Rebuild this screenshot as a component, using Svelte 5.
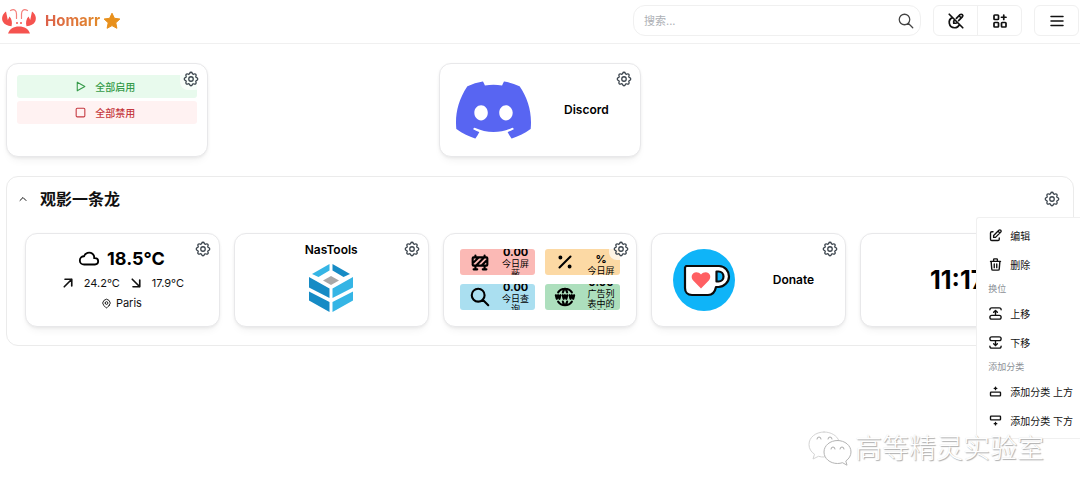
<script lang="ts">
  const icons: Record<string, string> = {
    gear: 'M10.325 4.317c.426 -1.756 2.924 -1.756 3.35 0a1.724 1.724 0 0 0 2.573 1.066c1.543 -.94 3.31 .826 2.37 2.37a1.724 1.724 0 0 0 1.065 2.572c1.756 .426 1.756 2.924 0 3.35a1.724 1.724 0 0 0 -1.066 2.573c.94 1.543 -.826 3.31 -2.37 2.37a1.724 1.724 0 0 0 -2.572 1.065c-.426 1.756 -2.924 1.756 -3.35 0a1.724 1.724 0 0 0 -2.573 -1.066c-1.543 .94 -3.31 -.826 -2.37 -2.37a1.724 1.724 0 0 0 -1.065 -2.572c-1.756 -.426 -1.756 -2.924 0 -3.35a1.724 1.724 0 0 0 1.066 -2.573c-.94 -1.543 .826 -3.31 2.37 -2.37c1 .608 2.296 .07 2.572 -1.065z M9 12a3 3 0 1 0 6 0a3 3 0 0 0 -6 0',
    play: 'M6 4v16l14 -8z',
    stop: 'M4 6a2 2 0 0 1 2 -2h12a2 2 0 0 1 2 2v12a2 2 0 0 1 -2 2h-12a2 2 0 0 1 -2 -2z',
    search: 'M3 10a7 7 0 1 0 14 0a7 7 0 1 0 -14 0 M21 21l-6 -6',
    editOff: 'M10.507 10.498l-1.507 1.502v3h3l1.493 -1.498m2 -2.01l4.89 -4.907a2.1 2.1 0 0 0 -2.97 -2.97l-4.913 4.896 M16 5l3 3 M7.476 7.471a7 7 0 0 0 2.524 13.529a7 7 0 0 0 6.53 -4.474 M3 3l18 18',
    gridAdd: 'M4 5a1 1 0 0 1 1 -1h4a1 1 0 0 1 1 1v4a1 1 0 0 1 -1 1h-4a1 1 0 0 1 -1 -1z M4 15a1 1 0 0 1 1 -1h4a1 1 0 0 1 1 1v4a1 1 0 0 1 -1 1h-4a1 1 0 0 1 -1 -1z M14 15a1 1 0 0 1 1 -1h4a1 1 0 0 1 1 1v4a1 1 0 0 1 -1 1h-4a1 1 0 0 1 -1 -1z M14 7h6 M17 4v6',
    menu: 'M4 6h16 M4 12h16 M4 18h16',
    chevron: 'M6 15l6 -6l6 6',
    cloud: 'M6.657 18c-2.572 0 -4.657 -2.007 -4.657 -4.483c0 -2.475 2.085 -4.482 4.657 -4.482c.393 -1.762 1.794 -3.2 3.675 -3.773c1.88 -.572 3.956 -.193 5.444 1c1.488 1.19 2.162 3.007 1.77 4.769h.99c1.913 0 3.464 1.56 3.464 3.486c0 1.927 -1.551 3.487 -3.465 3.487h-11.878',
    upRight: 'M17 7l-10 10 M8 7h9v9',
    downRight: 'M7 7l10 10 M17 8v9h-9',
    pin: 'M9 11a3 3 0 1 0 6 0a3 3 0 0 0 -6 0 M17.657 16.657l-4.243 4.243a2 2 0 0 1 -2.827 0l-4.244 -4.243a8 8 0 1 1 11.314 0z',
    barrier: 'M4 8a1 1 0 0 1 1 -1h14a1 1 0 0 1 1 1v7a1 1 0 0 1 -1 1h-14a1 1 0 0 1 -1 -1z M7 16v4 M7.5 16l9 -9 M13.5 16l6.5 -6.5 M4 13.5l6.5 -6.5 M17 16v4 M5 20h4 M15 20h4 M17 7v-2 M7 7v-2',
    percent: 'M16 17a1 1 0 1 0 2 0a1 1 0 1 0 -2 0 M6 7a1 1 0 1 0 2 0a1 1 0 1 0 -2 0 M6 18l12 -12',
    www: 'M19.5 7a9 9 0 0 0 -7.5 -4a8.991 8.991 0 0 0 -7.484 4 M11.5 3a16.989 16.989 0 0 0 -1.826 4 M12.5 3a16.989 16.989 0 0 1 1.828 4 M19.5 17a9 9 0 0 1 -7.5 4a8.991 8.991 0 0 1 -7.484 -4 M11.5 21a16.989 16.989 0 0 1 -1.826 -4 M12.5 21a16.989 16.989 0 0 0 1.828 -4 M2 10l1 4l1.5 -4l1.5 4l1 -4 M17 10l1 4l1.5 -4l1.5 4l1 -4 M9.5 10l1 4l1.5 -4l1.5 4l1 -4',
    edit: 'M8 6h-2a2 2 0 0 0 -2 2v10a2 2 0 0 0 2 2h10a2 2 0 0 0 2 -2v-2 M20.385 6.585a2.1 2.1 0 0 0 -2.97 -2.97l-8.415 8.385v3h3l8.385 -8.415z M16 5l3 3',
    trash: 'M4 7h16 M10 11v6 M14 11v6 M5 7l1 12a2 2 0 0 0 2 2h8a2 2 0 0 0 2 -2l1 -12 M9 7v-3a1 1 0 0 1 1 -1h4a1 1 0 0 1 1 1v3',
    moveUp: 'M21 6a3 3 0 0 0 -3 -3h-12a3 3 0 0 0 -3 3 M6 21h12a3 3 0 0 0 0 -6h-12a3 3 0 0 0 0 6z M12 15v-8 M9 10l3 -3l3 3',
    moveDown: 'M21 18a3 3 0 0 1 -3 3h-12a3 3 0 0 1 -3 -3 M3 6a3 3 0 0 1 3 -3h12a3 3 0 0 1 0 6h-12a3 3 0 0 1 -3 -3z M12 9v8 M9 14l3 3l3 -3',
    rowTop: 'M4 18v-4a1 1 0 0 1 1 -1h14a1 1 0 0 1 1 1v4a1 1 0 0 1 -1 1h-14a1 1 0 0 1 -1 -1z M12 9v-4 M10 7h4',
    rowBottom: 'M20 6v4a1 1 0 0 1 -1 1h-14a1 1 0 0 1 -1 -1v-4a1 1 0 0 1 1 -1h14a1 1 0 0 1 1 1z M12 15v4 M14 17h-4',
  };

  const stats = [
    { tone: 'red', icon: 'barrier', value: '0.00', label: '今日屏蔽' },
    { tone: 'orange', icon: 'percent', value: '0.00 %', label: '今日屏蔽' },
    { tone: 'blue', icon: 'search', value: '0.00', label: '今日查询' },
    { tone: 'green', icon: 'www', value: '0.00', label: '广告列表中的域名' },
  ];

  const menuGroups = [
    { label: '', items: [['edit', '编辑'], ['trash', '删除']] },
    { label: '换位', items: [['moveUp', '上移'], ['moveDown', '下移']] },
    { label: '添加分类', items: [['rowTop', '添加分类 上方'], ['rowBottom', '添加分类 下方']] },
  ];
</script>

{#snippet icon(name: string, size: number, stroke: number = 2)}
  <svg class="icon" width={size} height={size} viewBox="0 0 24 24" stroke-width={stroke} aria-hidden="true"><path d={icons[name]} /></svg>
{/snippet}

{#snippet settings()}
  <button class="settings" aria-label="设置">{@render icon('gear', 18, 1.7)}</button>
{/snippet}

<div class="page">
  <header>
    <a class="brand" href="#home">
      <svg width="36" height="26" viewBox="0 0 36 26" aria-hidden="true">
        <g fill="#f5534f">
          <path d="M5 3.500C1.500 6 .2 10 1.800 13.500c1.400 2.800 4.600 4.500 8.700 4.700c1-3.400.3-7.200-2-9.700L6.800 12z" />
          <path d="M31 3.500c3.500 2.500 4.800 6.500 3.200 10c-1.400 2.800-4.600 4.500-8.700 4.700c-1-3.400-.3-7.200 2-9.700l1.700 3.500z" />
          <path d="M7 25.500C8.500 21 12.500 18.500 18 18.500s9.500 2.500 11 7z" />
          <circle cx="16" cy="15" r="1" /><circle cx="20" cy="15" r="1" />
        </g>
        <g fill="none" stroke="#f4807c" stroke-width="1.200" stroke-linecap="round">
          <path d="M9.500 2.500c4-2 6 0 6 3.500v4.500" /><path d="M26.500 2.500c-4-2-6 0-6 3.500v4.500" />
        </g>
      </svg>
      <span class="name">Homarr</span>
      <svg class="star" width="18" height="18" viewBox="0 0 18 18" aria-hidden="true">
        <path d="M9 1.200l2.400 5.100 5.500.7-4.100 3.800 1.100 5.500L9 13.600l-4.900 2.700 1.100-5.500L1.100 7l5.500-.7z" fill="#e8901c" stroke="#e8901c" stroke-linejoin="round" />
      </svg>
    </a>
    <div class="tools">
      <div class="search">
        <input type="text" placeholder="搜索..." aria-label="搜索" />
        {@render icon('search', 18, 1.7)}
      </div>
      <div class="group">
        <button aria-label="退出编辑模式">{@render icon('editOff', 18, 2.3)}</button>
        <button aria-label="添加磁贴">{@render icon('gridAdd', 18, 2.3)}</button>
      </div>
      <div class="group">
        <button aria-label="菜单">{@render icon('menu', 18, 2)}</button>
      </div>
    </div>
  </header>

  <main>
    <div class="grid">
      <section class="card switches">
        <button class="switch on">{@render icon('play', 13)}全部启用</button>
        <button class="switch off">{@render icon('stop', 13)}全部禁用</button>
        {@render settings()}
      </section>
      <section class="card app third">
        <svg width="75" height="58" viewBox="0 2.800 24 18.400" fill="#5865f2" aria-hidden="true"><path d="M20.317 4.3698a19.7913 19.7913 0 00-4.8851-1.5152.0741.0741 0 00-.0785.0371c-.211.3753-.4447.8648-.6083 1.2495-1.8447-.2762-3.68-.2762-5.4868 0-.1636-.3933-.4058-.8742-.6177-1.2495a.077.077 0 00-.0785-.037 19.7363 19.7363 0 00-4.8852 1.515.0699.0699 0 00-.0321.0277C.5334 9.0458-.319 13.5799.0992 18.0578a.0824.0824 0 00.0312.0561c2.0528 1.5076 4.0413 2.4228 5.9929 3.0294a.0777.0777 0 00.0842-.0276c.4616-.6304.8731-1.2952 1.226-1.9942a.076.076 0 00-.0416-.1057c-.6528-.2476-1.2743-.5495-1.8722-.8923a.077.077 0 01-.0076-.1277c.1258-.0943.2517-.1923.3718-.2914a.0743.0743 0 01.0776-.0105c3.9278 1.7933 8.18 1.7933 12.0614 0a.0739.0739 0 01.0785.0095c.1202.099.246.1981.3728.2924a.077.077 0 01-.0066.1276 12.2986 12.2986 0 01-1.873.8914.0766.0766 0 00-.0407.1067c.3604.698.7719 1.3628 1.225 1.9932a.076.076 0 00.0842.0286c1.961-.6067 3.9495-1.5219 6.0023-3.0294a.077.077 0 00.0313-.0552c.5004-5.177-.8382-9.6739-3.5485-13.6604a.061.061 0 00-.0312-.0286zM8.02 15.3312c-1.1825 0-2.1569-1.0857-2.1569-2.419 0-1.3332.9555-2.4189 2.157-2.4189 1.2108 0 2.1757 1.0952 2.1568 2.419 0 1.3332-.9555 2.4189-2.1569 2.4189zm7.9748 0c-1.1825 0-2.1569-1.0857-2.1569-2.419 0-1.3332.9554-2.4189 2.1569-2.4189 1.2108 0 2.1757 1.0952 2.1568 2.419 0 1.3332-.946 2.4189-2.1568 2.4189Z" /></svg>
        <h3>Discord</h3>
        {@render settings()}
      </section>
    </div>

    <section class="category">
      <div class="head">
        <button class="fold" aria-label="折叠">{@render icon('chevron', 12, 2)}</button>
        <h2>观影一条龙</h2>
        <button class="more" aria-label="分类设置">{@render icon('gear', 18, 1.7)}</button>
      </div>

      <div class="grid inner">
        <section class="card weather">
          <div class="now">{@render icon('cloud', 22, 2)}<span>18.5°C</span></div>
          <div class="range">
            {@render icon('upRight', 18, 2.2)}<span>24.2°C</span>
            {@render icon('downRight', 18, 2.2)}<span>17.9°C</span>
          </div>
          <div class="place">{@render icon('pin', 11, 2)}<span>Paris</span></div>
          {@render settings()}
        </section>

        <section class="card tall">
          <h3>NasTools</h3>
          <svg width="44" height="48" viewBox="0 0 44 48" aria-hidden="true">
            <path d="M20.500 0v6.500L9.500 13 3 10z" fill="#35b5e5" />
            <path d="M23.500 0v6.500l11 6.500L41 10z" fill="#168bc5" />
            <path d="M22 12l8 4.500-8 4.500-8-4.500z" fill="#a8a8a8" />
            <path d="M0 13l20.500 11.500V34L0 23.500z M0 27.500L20.500 38v10L0 36.500z" fill="#168bc5" />
            <path d="M44 13L23.500 24.500V34L44 23.500z M44 27.500L23.500 38v10L44 36.500z" fill="#35b5e5" />
          </svg>
          {@render settings()}
        </section>

        <section class="card stats">
          {#each stats as stat}
            <div class="stat {stat.tone}">
              {@render icon(stat.icon, 22, 2.3)}
              <div class="figures"><strong>{stat.value}</strong><span>{stat.label}</span></div>
            </div>
          {/each}
          {@render settings()}
        </section>

        <section class="card app">
          <svg width="62" height="62" viewBox="0 0 62 62" aria-hidden="true">
            <circle cx="31" cy="31" r="31" fill="#0fb4f8" />
            <path d="M13 17h33c6 0 10 5 10 10.500S51 38 45.500 38H43c-1 5-4 8-8 8H19c-4.500 0-7-3-7-7V18.500z" fill="#fff" stroke="#0b0b0b" stroke-width="2.200" stroke-linejoin="round" />
            <path d="M43.500 22.500h2c3 0 5 2.200 5 5s-2 5-5 5h-2z" fill="#0fb4f8" stroke="#0b0b0b" stroke-width="2.200" stroke-linejoin="round" />
            <path d="M28 39.500l-7.800-8c-2.200-2.500-1.800-5.500.2-7.200 2.200-1.800 5.600-1.200 7.600 1.300 2-2.500 5.400-3.100 7.600-1.300 2 1.700 2.400 4.700.2 7.200z" fill="#ff5f62" />
          </svg>
          <h3>Donate</h3>
          {@render settings()}
        </section>

        <section class="card clock"><time>11:17</time></section>
      </div>

      <div class="menu" role="menu">
        {#each menuGroups as group}
          {#if group.label}<div class="label">{group.label}</div>{/if}
          {#each group.items as [glyph, text]}
            <button class="item" role="menuitem">{@render icon(glyph, 15, 2.2)}{text}</button>
          {/each}
        {/each}
      </div>
    </section>
  </main>

  <div class="watermark">
    <svg width="44" height="36" viewBox="0 0 44 36" fill="#fff" stroke="#d4d4d4" stroke-width="1" stroke-linecap="round" stroke-linejoin="round" aria-hidden="true">
      <path d="M16 1C7.500 1 1 6.500 1 13.500c0 4 2 7.500 5.500 9.700L5 28l5.500-2.700c2 .6 4 .8 6 .7L31 10C29 4.500 23 1 16 1z" />
      <path d="M29.500 9.500C22 9.500 16 14.500 16 21s6 11.500 13.500 11.500c1.700 0 3.400-.3 5-.8l4.500 2.500-1.200-4.200c3.200-2.200 5.200-5.400 5.200-9C43 14.500 37 9.500 29.500 9.500z" stroke="#b4b4b4" />
      <path d="M9 8a2 2 0 0 1 4 0M20 8a2 2 0 0 1 4 0M23 18a2 2 0 0 1 4 0M32 18a2 2 0 0 1 4 0" fill="none" stroke="#aaa" />
    </svg>
    <span>高等精灵实验室</span>
  </div>
</div>

<style>
  :global(body) { margin: 0; background: #fff; }
  * { box-sizing: border-box; }
  .page {
    position: relative;
    min-height: 100vh;
    color: #111;
    font-family: Inter, "Noto Sans CJK SC", sans-serif;
    font-size: 11px;
    line-height: 16px;
  }
  button { font: inherit; color: inherit; background: none; border: 0; padding: 0; cursor: pointer; }
  h2, h3 { margin: 0; }
  h3 { font-size: 12px; font-weight: 600; color: #000; }
  .icon { display: block; flex: none; fill: none; stroke: currentColor; stroke-linecap: round; stroke-linejoin: round; }

  header {
    display: flex;
    align-items: center;
    justify-content: space-between;
    padding: 5px 1px 7px;
    border-bottom: 1px solid #f0f0f0;
  }
  .brand { display: flex; align-items: center; text-decoration: none; }
  .name {
    margin: 0 3px 0 8px;
    font-size: 15px;
    font-weight: 700;
    background: linear-gradient(90deg, #dc604a, #e28a2a);
    background-clip: text;
    color: transparent;
  }
  .tools { display: flex; gap: 12px; }
  .search {
    display: flex;
    align-items: center;
    width: 288px;
    height: 31px;
    padding: 0 5px 0 10px;
    border: 1px solid #f0f0f0;
    border-radius: 12px;
    color: #444;
  }
  input { flex: 1; min-width: 0; padding: 0; border: 0; outline: 0; background: none; font: inherit; }
  input::placeholder { color: #adb0b5; opacity: 1; }
  .group { display: flex; border: 1px solid #f0f0f0; border-radius: 6px; }
  .group button { display: grid; place-items: center; width: 43px; height: 29px; }
  .group button + button { border-left: 1px solid #f0f0f0; width: 44px; }

  main { display: flex; flex-direction: column; gap: 19px; padding: 19px 6px; }
  .grid { display: grid; grid-template-columns: repeat(5, minmax(0, 1fr)); gap: 15px; }
  .inner { gap: 14px; }
  .card {
    position: relative;
    height: 94px;
    background: #fff;
    border: 1px solid #e8e8ea;
    border-radius: 12px;
    box-shadow: 0 1px 3px rgba(0, 0, 0, .06), 0 6px 10px -4px rgba(0, 0, 0, .07);
  }
  .third { grid-column: 3; }
  .settings {
    position: absolute;
    top: 3px;
    right: 4px;
    display: grid;
    place-items: center;
    width: 23px;
    height: 23px;
    border-radius: 8px;
    background: rgba(255, 255, 255, .7);
    color: #3b444d;
  }

  .switches { display: flex; flex-direction: column; gap: 3px; padding: 11px 10px; }
  .switch {
    display: flex;
    align-items: center;
    justify-content: center;
    gap: 8px;
    height: 23px;
    padding-right: 4px;
    border-radius: 3px;
    font-size: 10px;
    font-weight: 500;
  }
  .on { background: #e8faed; color: #359a49; }
  .off { background: #fff2f2; color: #c53940; }

  .app { display: grid; grid-template-columns: 1fr 1fr; place-items: center; padding: 0 7px; }
  .tall { display: flex; flex-direction: column; align-items: center; gap: 6px; padding: 8px; }

  .category { position: relative; border: 1px solid #ebebeb; border-radius: 12px; padding: 10px 18px 18px; }
  .head { display: flex; align-items: center; height: 24px; margin-bottom: 22px; }
  .fold { margin: 0 11px 0 -8px; }
  h2 { font-size: 16px; font-weight: 600; line-height: 24px; }
  .more { margin-left: auto; margin-right: -6px; color: #3b444d; }

  .weather { display: flex; flex-direction: column; align-items: center; padding: 13px 2px 0 0; }
  .now, .range, .place { display: flex; align-items: center; }
  .now { gap: 7px; font-size: 18px; font-weight: 700; line-height: 24px; color: #000; }
  .range { gap: 7px; height: 24px; }
  .place { gap: 4px; }

  .stats { display: grid; grid-template-columns: 1fr 1fr; grid-auto-rows: 26px; gap: 9px 10px; padding: 15px 16px; }
  .stat { display: flex; align-items: center; gap: 10px; padding-left: 9px; border-radius: 3px; overflow: hidden; color: #000; }
  .figures { display: flex; flex-direction: column; align-items: center; width: 30px; text-align: center; font-size: 9px; line-height: 10px; }
  .figures span { width: 27px; }
  .figures strong { width: 30px; font-size: 11px; line-height: 14px; }
  .red { background: #fbb9b5; }
  .orange { background: #fcd9a4; }
  .blue { background: #aadff0; }
  .green { background: #addfbd; }

  .clock { display: grid; place-items: center; font-size: 25px; font-weight: 700; color: #000; }

  .menu {
    position: absolute;
    top: 40px;
    right: -7px;
    padding: 3px 0;
    background: #fff;
    border: 1px solid #f0f0f0;
    border-right: 0;
    border-radius: 3px 0 0 3px;
  }
  .item {
    display: flex;
    align-items: center;
    gap: 7px;
    width: 100%;
    height: 29px;
    padding: 0 7px 0 11px;
    font-size: 10px;
    white-space: nowrap;
  }
  .label { height: 20px; padding-left: 11px; font-size: 9px; line-height: 20px; color: #8b9096; }

  .watermark { position: absolute; top: 431px; right: 36px; display: flex; align-items: center; gap: 3px; pointer-events: none; }
  .watermark span { font-size: 27px; font-weight: 300; line-height: 36px; color: #fff; text-shadow: 1px 1px 1px #aaa, 0 0 1px #ddd; }
</style>
